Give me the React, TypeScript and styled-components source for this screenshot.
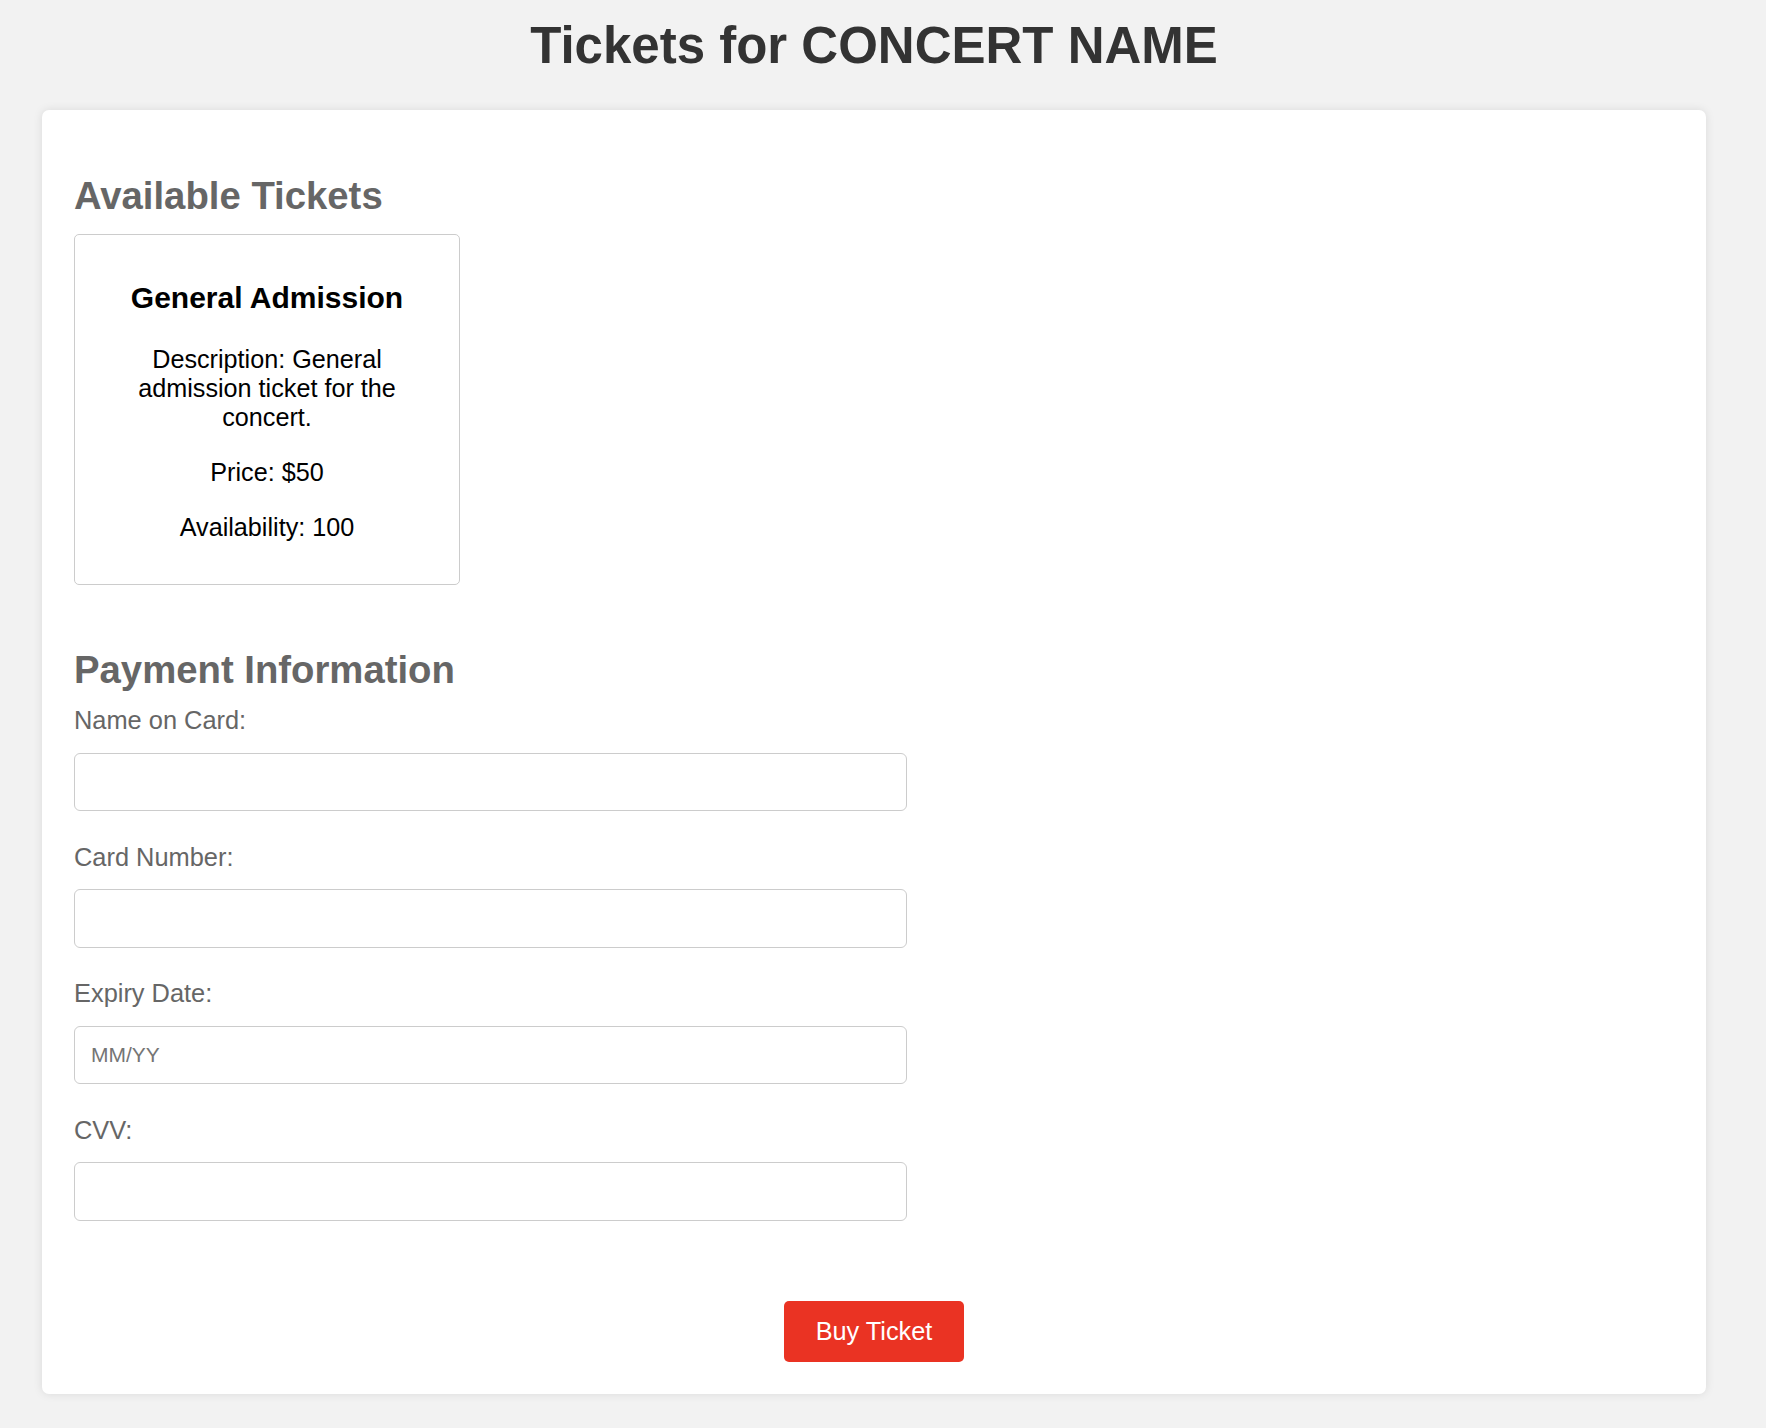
import React from "react";
import styled, { createGlobalStyle } from "styled-components";

const GlobalStyle = createGlobalStyle`
  html, body {
    margin: 0;
    padding: 0;
    background: #f2f2f2;
    font-family: "Liberation Sans", Arial, Helvetica, sans-serif;
  }
  * { box-sizing: border-box; }
`;

const Page = styled.div`
  padding: 17px 60px 35px 42px;
`;

const Title = styled.h1`
  margin: 0 0 35px;
  font-size: 51px;
  line-height: 58px;
  font-weight: bold;
  text-align: center;
  color: #333;
`;

const Card = styled.main`
  display: flex;
  flex-direction: column;
  background: #fff;
  border-radius: 7px;
  box-shadow: 0 0 10px rgba(0, 0, 0, 0.1);
  padding: 32px;
`;

const Section = styled.section<{ $bottom?: number }>`
  display: flex;
  flex-direction: column;
  margin-bottom: ${(p) => p.$bottom ?? 0}px;
`;

const SectionTitle = styled.h2`
  margin: 32px 0 15px;
  font-size: 38.3px;
  line-height: 43px;
  font-weight: bold;
  color: #666;
`;

const TicketList = styled.div`
  display: flex;
  flex-wrap: wrap;
  gap: 20px;
  margin-top: 2px;
`;

const TicketCard = styled.div`
  width: 386px;
  border: 1px solid #ccc;
  border-radius: 5px;
  padding: 16px 31px;
  text-align: center;
  color: #000;
`;

const TicketName = styled.h3`
  margin: 30px 0;
  font-size: 30px;
  line-height: 34px;
  font-weight: bold;
`;

const TicketText = styled.p`
  margin: 26px 0;
  font-size: 25.2px;
  line-height: 29px;
`;

const Form = styled.form`
  display: flex;
  flex-direction: column;
  gap: 31.5px;
`;

const Field = styled.div`
  display: flex;
  flex-direction: column;
`;

const Label = styled.label`
  display: block;
  margin-bottom: 18px;
  font-size: 25.4px;
  line-height: 28.5px;
  color: #666;
`;

const Input = styled.input`
  width: 833px;
  height: 58.5px;
  border: 1px solid #ccc;
  border-radius: 6px;
  padding: 0 16px;
  font-family: inherit;
  font-size: 21px;
  color: #333;
  background: #fff;
  outline: none;
  &::placeholder {
    color: #757575;
  }
`;

const ButtonRow = styled.div`
  display: flex;
  justify-content: center;
  margin-top: 80px;
`;

const BuyButton = styled.button`
  border: none;
  border-radius: 5px;
  background: #ea3323;
  color: #fff;
  font-family: inherit;
  font-size: 25.3px;
  line-height: 29px;
  padding: 16px 32px;
  cursor: pointer;
`;

type Ticket = {
  name: string;
  description: string;
  price: number;
  availability: number;
};

const tickets: Ticket[] = [
  {
    name: "General Admission",
    description: "General admission ticket for the concert.",
    price: 50,
    availability: 100,
  },
];

const fields = [
  { id: "name", label: "Name on Card:", placeholder: "" },
  { id: "number", label: "Card Number:", placeholder: "" },
  { id: "expiry", label: "Expiry Date:", placeholder: "MM/YY" },
  { id: "cvv", label: "CVV:", placeholder: "" },
];

export default function App() {
  return (
    <>
      <GlobalStyle />
      <Page>
        <Title>Tickets for CONCERT NAME</Title>
        <Card>
          <Section $bottom={31}>
            <SectionTitle>Available Tickets</SectionTitle>
            <TicketList>
              {tickets.map((t) => (
                <TicketCard key={t.name}>
                  <TicketName>{t.name}</TicketName>
                  <TicketText>Description: {t.description}</TicketText>
                  <TicketText>Price: ${t.price}</TicketText>
                  <TicketText>Availability: {t.availability}</TicketText>
                </TicketCard>
              ))}
            </TicketList>
          </Section>
          <Section>
            <SectionTitle>Payment Information</SectionTitle>
            <Form onSubmit={(e) => e.preventDefault()}>
              {fields.map((f) => (
                <Field key={f.id}>
                  <Label htmlFor={f.id}>{f.label}</Label>
                  <Input id={f.id} type="text" placeholder={f.placeholder} />
                </Field>
              ))}
            </Form>
          </Section>
          <ButtonRow>
            <BuyButton type="button">Buy Ticket</BuyButton>
          </ButtonRow>
        </Card>
      </Page>
    </>
  );
}
